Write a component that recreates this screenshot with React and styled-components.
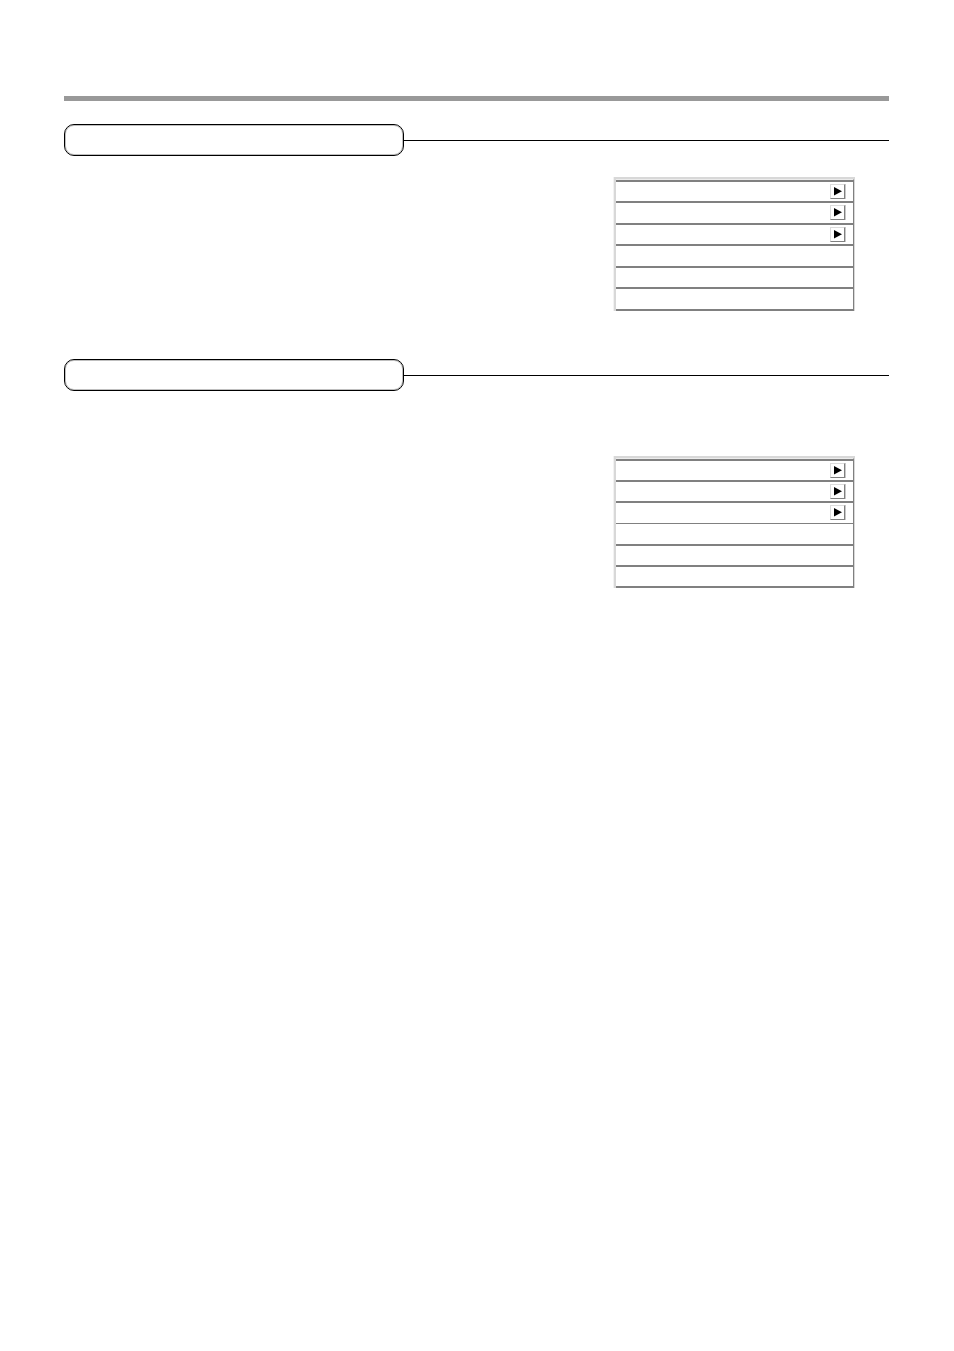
import styled, { createGlobalStyle } from 'styled-components'

const COLORS = {
  bar: '#999999',
  line: '#808080',
  frame: '#d8d8d8',
  frameSoft: '#ececec',
  ink: '#000000',
}

const GlobalStyle = createGlobalStyle`
  body {
    margin: 0;
    background-color: white;
    font-family: "Liberation Sans", Arial, sans-serif;
  }
`

const Page = styled.main`
  box-sizing: border-box;
  min-height: 100vh;
  padding: 96px 65px 48px 64px;
`

const TopBar = styled.div`
  height: 5px;
  margin-bottom: 23px;
  background-color: ${COLORS.bar};
`

const Section = styled.section`
  margin-bottom: 48px;
`

const SectionHeader = styled.div`
  display: flex;
  align-items: center;
`

const Title = styled.div`
  box-sizing: border-box;
  flex: 0 1 340px;
  height: 32px;
  border: 1px solid ${COLORS.ink};
  border-radius: 10px;
  box-shadow: inset 0 0 0 1px rgba(0, 0, 0, 0.25);
`

const Rule = styled.div`
  flex: 1;
  height: 1px;
  background-color: ${COLORS.ink};
`

const Menu = styled.div`
  box-sizing: border-box;
  width: 241px;
  margin-top: ${(props) => props.$gap}px;
  margin-left: auto;
  margin-right: 34px;
  border-top: 2px solid ${COLORS.frame};
  border-left: 2px solid ${COLORS.frame};
  border-right: 1px solid ${COLORS.frame};
  box-shadow: -1px 0 0 #f2f2f2;
`

const Rows = styled.ul`
  list-style: none;
  margin: 0;
  padding: 0;
  border-top: 1px solid ${COLORS.frameSoft};
  border-right: 1px solid ${COLORS.line};
`

const Row = styled.li`
  box-sizing: border-box;
  display: flex;
  align-items: flex-start;
  justify-content: flex-end;
  height: ${(props) => props.$height}px;
  padding-top: 2px;
  padding-right: 8px;
  border-bottom: ${(props) => (props.$thin ? 1 : 2)}px solid ${COLORS.line};

  &:first-child {
    height: ${(props) => props.$height + 2}px;
    border-top: 2px solid ${COLORS.line};
  }
`

const ArrowButton = styled.button`
  display: flex;
  align-items: center;
  justify-content: center;
  width: 15px;
  height: 15px;
  padding: 0;
  background-color: white;
  border: 1px solid;
  border-color: #dcdcdc ${COLORS.line} ${COLORS.line} #dcdcdc;
  box-shadow: 1px 0 0 #c8c8c8;
  cursor: pointer;
`

const MENUS = [
  { id: 'first', gap: 21, rows: [21, 22, 21, 22, 21, 22] },
  { id: 'second', gap: 65, thinRow: 2, rows: [21, 21, 21, 22, 21, 21] },
]

function Arrow() {
  return (
    <svg width="8" height="9" viewBox="0 0 8 9" aria-hidden="true">
      <path d="M0 0L8 4.3L0 8.6Z" fill={COLORS.ink} />
    </svg>
  )
}

function MenuSection({ menu }) {
  return (
    <Section>
      <SectionHeader>
        <Title />
        <Rule />
      </SectionHeader>
      <Menu $gap={menu.gap}>
        <Rows>
          {menu.rows.map((height, index) => (
            <Row key={index} $height={height} $thin={menu.thinRow === index}>
              {index < 3 && (
                <ArrowButton type="button" aria-label={`Open item ${index + 1}`}>
                  <Arrow />
                </ArrowButton>
              )}
            </Row>
          ))}
        </Rows>
      </Menu>
    </Section>
  )
}

function App() {
  return (
    <>
      <GlobalStyle />
      <Page>
        <TopBar />
        {MENUS.map((menu) => (
          <MenuSection key={menu.id} menu={menu} />
        ))}
      </Page>
    </>
  )
}

export default App
